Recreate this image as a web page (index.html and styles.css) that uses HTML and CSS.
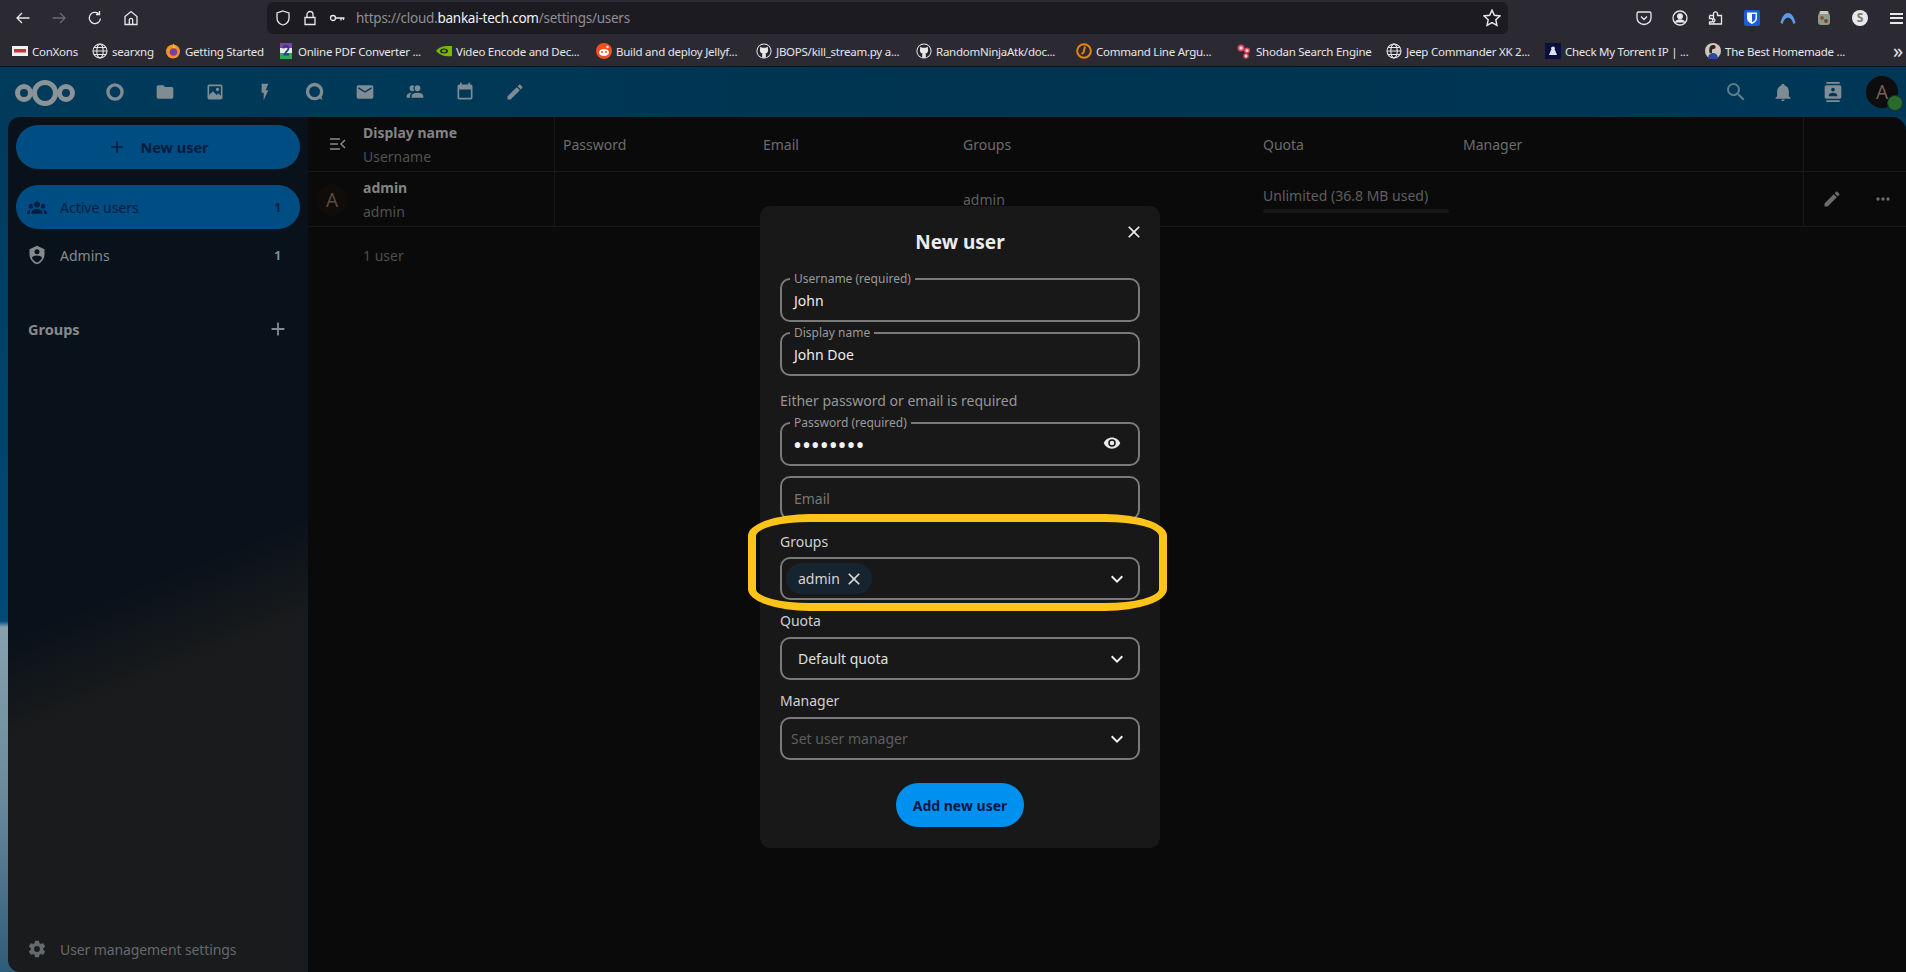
FILE: index.html
```html
<!DOCTYPE html>
<html lang="en">
<head>
<meta charset="utf-8">
<title>Users - Nextcloud</title>
<link rel="stylesheet" href="styles.css">
</head>
<body>
<svg class="sprite" aria-hidden="true">
  <symbol id="globe" viewBox="0 0 16 16"><g fill="none" stroke="#e6e6e6" stroke-width="1.1"><circle cx="8" cy="8" r="7"/><ellipse cx="8" cy="8" rx="3.2" ry="7"/><path d="M1 8h14M2 4.5h12M2 11.5h12"/></g></symbol>
  <symbol id="github" viewBox="0 0 16 16"><circle cx="8" cy="8" r="7.6" fill="#e8e8e8"/><circle cx="8" cy="8" r="6.6" fill="#25242b"/><path fill="#e8e8e8" d="M4.3 3.8l2 .9h3.4l2-.9.3 2.4c.5 2.6-.7 4.1-2.7 4.3.4.3.5.8.5 1.3v3H6.200v-3c0-.5.1-1 .5-1.300-2-.2-3.200-1.700-2.700-4.300z"/></symbol>
  <symbol id="chev" viewBox="0 0 24 24"><path d="M7.410 8.580L12 13.170L16.590 8.580L18 10L12 16L6 10L7.410 8.580Z"/></symbol>
  <symbol id="pencil" viewBox="0 0 24 24"><path d="M20.710 7.040C21.100 6.650 21.100 6 20.710 5.630L18.370 3.290C18 2.900 17.350 2.900 16.960 3.290L15.120 5.120L18.870 8.870M3 17.250V21H6.750L17.810 9.930L14.060 6.180L3 17.250Z"/></symbol>
  <symbol id="plus" viewBox="0 0 24 24"><path d="M19 13H13V19H11V13H5V11H11V5H13V11H19V13Z"/></symbol>
  <symbol id="close" viewBox="0 0 24 24"><path d="M19 6.410L17.590 5L12 10.590L6.410 5L5 6.410L10.590 12L5 17.590L6.410 19L12 13.410L17.590 19L19 17.590L13.410 12L19 6.410Z"/></symbol>
</svg>

<div class="page">
  <div class="toolbar">
    <div class="nav-slot"><svg class="tb-ic" viewBox="0 0 16 16"><path d="M14.500 8H2M7 3L2 8l5 5"/></svg></div>
    <div class="nav-slot dim"><svg class="tb-ic" viewBox="0 0 16 16"><path d="M1.500 8H14M9 3l5 5-5 5"/></svg></div>
    <div class="nav-slot"><svg class="tb-ic" viewBox="0 0 16 16"><path d="M13.500 8.500A5.600 5.600 0 1 1 11.500 3.600M12.500 1v3.500H9"/></svg></div>
    <div class="nav-slot"><svg class="tb-ic" viewBox="0 0 16 16"><path d="M2 14.500V6.500L8 1.500l6 5v8zM6.300 14.500v-4.500a1.700 1.700 0 0 1 3.400 0v4.500"/></svg></div>
    <div class="urlbar">
      <svg class="tb-ic" viewBox="0 0 16 16"><path d="M8 1l6 2v5c0 3.500-2.500 6-6 7-3.500-1-6-3.500-6-7V3z"/></svg>
      <svg class="tb-ic" viewBox="0 0 16 16"><path d="M3 7.500h10v7H3zM5 7.500V4.500a3 3 0 0 1 6 0v3"/></svg>
      <svg class="tb-ic" viewBox="0 0 16 16"><circle cx="4" cy="8" r="2.500"/><path d="M6.500 8h9M12 8v2.500M14.500 8v2"/></svg>
      <span class="url"><span class="url-dim">https://cloud.</span>bankai-tech.com<span class="url-dim">/settings/users</span></span>
      <svg class="tb-ic star" viewBox="0 0 16 16"><path d="M8 1l2.100 4.600 5 .6-3.700 3.400 1 5L8 12.100 3.600 14.600l1-5L.9 6.200l5-.6z"/></svg>
    </div>
    <div class="tb-right">
      <div class="nav-slot"><svg class="tb-ic" viewBox="0 0 16 16"><path d="M2.500 2h11A1.500 1.500 0 0 1 15 3.500V8a7 6.500 0 0 1-14 0V3.500A1.500 1.500 0 0 1 2.500 2zM5 6.500l3 3 3-3"/></svg></div>
      <div class="nav-slot"><svg class="tb-ic" viewBox="0 0 16 16"><circle cx="8" cy="8" r="7"/><circle cx="8" cy="6.300" r="2.300" fill="#eee"/><path d="M3.500 12.500c1-2 3-2.500 4.500-2.500s3.500.5 4.500 2.500" fill="#eee"/></svg></div>
      <div class="nav-slot"><svg class="tb-ic" viewBox="0 0 16 16"><path d="M1.500 5.500h4V3.800a2 2 0 0 1 4 0V5.500h4v8.500h-8v-2a1.800 1.800 0 0 0 0-3.500V5.500M1.500 5.500v3h2a1.800 1.800 0 0 1 0 3.500h-2v2h4"/></svg></div>
      <div class="nav-slot"><svg class="ext" viewBox="0 0 16 16"><rect width="16" height="16" rx="2" fill="#175ddc"/><path d="M3 2.500h10v6c0 2.500-2.500 4.500-5 5.500-2.500-1-5-3-5-5.500z" fill="#fff"/><path d="M8 4h3.500v4.500c0 1.500-1.800 3-3.500 3.800z" fill="#175ddc"/></svg></div>
      <div class="nav-slot"><svg class="ext" viewBox="0 0 16 16"><path d="M.5 13C2 6 5 3 8 3s6 3 7.500 10l-2 1C12 9.500 10 7.500 8 7.500S4 9.500 2.500 14z" fill="#5d9be8"/></svg></div>
      <div class="nav-slot"><svg class="ext" viewBox="0 0 16 16"><rect x="2" y="3" width="12" height="12" rx="3" fill="#8d9a8c"/><rect x="3.500" y="1" width="9" height="3" rx="1" fill="#c6ccc4"/><circle cx="6" cy="8" r="2" fill="#8a5a3c"/><circle cx="10" cy="11" r="2" fill="#6d4a30"/></svg></div>
      <div class="nav-slot"><span class="ext-s">S</span></div>
      <div class="nav-slot"><span class="burger"></span></div>
    </div>
  </div>

  <div class="bookmarks">
    <div class="bm"><svg class="fav" viewBox="0 0 16 16"><rect y="3" width="16" height="10" fill="#f2f2f2"/><rect x="2" y="6" width="12" height="3.500" fill="#c8343a"/></svg><span>ConXons</span></div>
    <div class="bm"><svg class="fav"><use href="#globe"/></svg><span>searxng</span></div>
    <div class="bm"><svg class="fav" viewBox="0 0 16 16"><circle cx="8" cy="8.500" r="7" fill="#f7931e"/><path d="M8 .5c2 2 .5 3 3 4l-3 2z" fill="#f9c33a"/><circle cx="8.500" cy="9" r="3.800" fill="#7b3fa0"/></svg><span>Getting Started</span></div>
    <div class="bm"><svg class="fav" viewBox="0 0 16 16"><rect x="2" y="0" width="12" height="5" fill="#7d3fa8"/><rect x="2" y="5" width="12" height="5" fill="#e8e8e8"/><rect x="2" y="10" width="12" height="6" fill="#2fa84f"/><path d="M5.500 5.500c0-3 5-3 5 0 0 2-3 3-4 6h4.500" fill="none" stroke="#24418c" stroke-width="1.800"/></svg><span>Online PDF Converter ...</span></div>
    <div class="bm"><svg class="fav" viewBox="0 0 16 16"><path d="M0 8C3 3.500 8 2.500 16 3v10c-7 .8-12-.5-16-5z" fill="#76b900"/><ellipse cx="8" cy="8" rx="4" ry="2.500" fill="#2b2a33"/><ellipse cx="8" cy="8" rx="2" ry="1.200" fill="#76b900"/></svg><span>Video Encode and Dec...</span></div>
    <div class="bm"><svg class="fav" viewBox="0 0 16 16"><circle cx="8" cy="8" r="8" fill="#f0501e"/><ellipse cx="8" cy="9.500" rx="5" ry="3.500" fill="#fff"/><circle cx="6" cy="9" r="1" fill="#f0501e"/><circle cx="10" cy="9" r="1" fill="#f0501e"/><circle cx="11.500" cy="4" r="1.200" fill="#fff"/></svg><span>Build and deploy Jellyf...</span></div>
    <div class="bm"><svg class="fav"><use href="#github"/></svg><span>JBOPS/kill_stream.py a...</span></div>
    <div class="bm"><svg class="fav"><use href="#github"/></svg><span>RandomNinjaAtk/doc...</span></div>
    <div class="bm"><svg class="fav" viewBox="0 0 16 16"><circle cx="8" cy="8" r="6.800" fill="none" stroke="#e8820c" stroke-width="2"/><path d="M9 3.500L7.500 9.500 5.500 11" fill="none" stroke="#e8820c" stroke-width="2"/></svg><span>Command Line Argu...</span></div>
    <div class="bm"><svg class="fav" viewBox="0 0 16 16"><circle cx="5" cy="5" r="3.500" fill="#d9485c"/><circle cx="5" cy="5" r="1.800" fill="#f6d5d9"/><circle cx="11" cy="7.500" r="3" fill="#d9485c"/><circle cx="11" cy="7.500" r="1.500" fill="#f6d5d9"/><circle cx="10" cy="13" r="2.800" fill="#d9485c"/><circle cx="10" cy="13" r="1.400" fill="#f6d5d9"/></svg><span>Shodan Search Engine</span></div>
    <div class="bm"><svg class="fav"><use href="#globe"/></svg><span>Jeep Commander XK 2...</span></div>
    <div class="bm"><svg class="fav" viewBox="0 0 16 16"><rect width="16" height="16" fill="#0a0f3c"/><path d="M4 12l2-5h4l2 5z" fill="#dfe3ee"/><circle cx="8" cy="5.500" r="2" fill="#dfe3ee"/></svg><span>Check My Torrent IP | ...</span></div>
    <div class="bm"><svg class="fav" viewBox="0 0 16 16"><circle cx="8" cy="8" r="8" fill="#cfc6c0"/><path d="M3 16c0-4 2-6 5-6s5 2 5 6z" fill="#2b4aa0"/><path d="M4.500 10c-1-6 1-8 3.500-8s3.500 2 2 3.500L7 6.500 7 10z" fill="#332420"/></svg><span>The Best Homemade ...</span></div>
    <div class="bm-more">»</div>
  </div>

  <header class="header">
    <div class="logo-slot">
      <svg class="logo" viewBox="0 0 60 26"><g fill="none" stroke="currentColor" stroke-width="5"><circle cx="9" cy="13" r="6.500"/><circle cx="30" cy="13" r="10.500"/><circle cx="51" cy="13" r="6.500"/></g></svg>
    </div>
    <nav class="apps">
      <div class="app"><svg class="ic20" viewBox="0 0 24 24"><circle cx="12" cy="12" r="8.500" fill="none" stroke="currentColor" stroke-width="4"/></svg></div>
      <div class="app"><svg class="ic20" viewBox="0 0 24 24"><path d="M10 4H4C2.890 4 2 4.890 2 6V18A2 2 0 0 0 4 20H20A2 2 0 0 0 22 18V8C22 6.890 21.100 6 20 6H12L10 4Z"/></svg></div>
      <div class="app"><svg class="ic20" viewBox="0 0 24 24"><path fill-rule="evenodd" d="M5 3H19A2 2 0 0 1 21 5V19A2 2 0 0 1 19 21H5A2 2 0 0 1 3 19V5A2 2 0 0 1 5 3ZM5 5V15.500L9.500 11L14 15.500L16 13.500L19 16.500V5ZM15 7A2 2 0 1 1 15 11A2 2 0 1 1 15 7Z"/></svg></div>
      <div class="app"><svg class="ic20" viewBox="0 0 24 24"><path d="M7 2V13H10V22L17 10H13L17 2H7Z" transform="matrix(.8 0 0 1 2.400 0)"/></svg></div>
      <div class="app"><svg class="ic20" viewBox="0 0 24 24"><circle cx="11.500" cy="11.500" r="8.500" fill="none" stroke="currentColor" stroke-width="4"/><path d="M15 18l6 4-2-7z"/></svg></div>
      <div class="app"><svg class="ic20" viewBox="0 0 24 24"><path d="M20 8L12 13L4 8V6L12 11L20 6M20 4H4C2.890 4 2 4.890 2 6V18A2 2 0 0 0 4 20H20A2 2 0 0 0 22 18V6C22 4.890 21.100 4 20 4Z"/></svg></div>
      <div class="app"><svg class="ic20 flip" viewBox="0 0 24 24"><path d="M16 17V19H2V17S2 13 9 13 16 17 16 17M12.500 7.500A3.500 3.500 0 1 0 9 11A3.500 3.500 0 0 0 12.500 7.500M15.940 13A5.320 5.320 0 0 1 18 17V19H22V17S22 13.370 15.940 13M15 4A3.390 3.390 0 0 0 13.070 4.590A5 5 0 0 1 13.070 10.410A3.390 3.390 0 0 0 15 11A3.500 3.500 0 0 0 15 4Z"/></svg></div>
      <div class="app"><svg class="ic20" viewBox="0 0 24 24"><path fill-rule="evenodd" d="M5 3H6V1H8V3H16V1H18V3H19A2 2 0 0 1 21 5V19A2 2 0 0 1 19 21H5A2 2 0 0 1 3 19V5A2 2 0 0 1 5 3ZM5 9V19H19V9Z"/></svg></div>
      <div class="app"><svg class="ic20"><use href="#pencil"/></svg></div>
    </nav>
    <div class="hdr-right">
      <div class="app search"><svg class="ic24" viewBox="0 0 24 24"><path d="M9.500 3A6.500 6.500 0 0 1 16 9.500C16 11.110 15.410 12.590 14.440 13.730L14.710 14H15.500L20.500 19L19 20.500L14 15.500V14.710L13.730 14.440C12.590 15.410 11.110 16 9.500 16A6.500 6.500 0 0 1 3 9.500A6.500 6.500 0 0 1 9.500 3M9.500 5C7 5 5 7 5 9.500C5 12 7 14 9.500 14C12 14 14 12 14 9.500C14 7 12 5 9.500 5Z"/></svg></div>
      <div class="app"><svg class="ic20" viewBox="0 0 24 24"><path d="M21 19V20H3V19L5 17V11C5 7.900 7.030 5.170 10 4.290C10 4.190 10 4.100 10 4A2 2 0 0 1 12 2A2 2 0 0 1 14 4C14 4.100 14 4.190 14 4.290C16.970 5.170 19 7.900 19 11V17L21 19M14 21A2 2 0 0 1 12 23A2 2 0 0 1 10 21"/></svg></div>
      <div class="app"><svg class="ic20" viewBox="0 0 24 24"><path d="M20 0H4V2H20V0M4 24H20V22H4V24M20 4H4C2.900 4 2 4.900 2 6V18C2 19.100 2.900 20 4 20H20C21.100 20 22 19.100 22 18V6C22 4.900 21.100 4 20 4M12 6.750C13.240 6.750 14.250 7.760 14.250 9C14.250 10.240 13.240 11.250 12 11.250C10.760 11.250 9.750 10.240 9.750 9C9.750 7.760 10.760 6.750 12 6.750M17 17H7V15.500C7 13.830 10.330 13 12 13C13.670 13 17 13.830 17 15.500V17Z"/></svg></div>
      <div class="me"><span class="me-avatar">A<span class="me-status"></span></span></div>
    </div>
  </header>

  <div class="workspace">
    <aside class="sidebar">
      <div class="new-user"><svg class="ic20"><use href="#plus"/></svg><span>New user</span></div>
      <div class="side-item active">
        <svg class="ic20 side-ic" viewBox="0 0 24 24"><path d="M12 5.500A3.500 3.500 0 0 1 15.500 9A3.500 3.500 0 0 1 12 12.500A3.500 3.500 0 0 1 8.500 9A3.500 3.500 0 0 1 12 5.500M5 8C5.560 8 6.080 8.150 6.530 8.420C6.380 9.850 6.800 11.270 7.660 12.380C7.160 13.340 6.160 14 5 14A3 3 0 0 1 2 11A3 3 0 0 1 5 8M19 8A3 3 0 0 1 22 11A3 3 0 0 1 19 14C17.840 14 16.840 13.340 16.340 12.380C17.200 11.270 17.620 9.850 17.470 8.420C17.920 8.150 18.440 8 19 8M5.500 18.250C5.500 16.180 8.410 14.500 12 14.500C15.590 14.500 18.500 16.180 18.500 18.250V20H5.500V18.250M0 20V18.500C0 17.110 1.890 15.940 4.450 15.600C3.860 16.280 3.500 17.220 3.500 18.250V20H0M24 20H20.500V18.250C20.500 17.220 20.140 16.280 19.550 15.600C22.110 15.940 24 17.110 24 18.500V20Z"/></svg>
        <span class="side-label">Active users</span><span class="count">1</span>
      </div>
      <div class="side-item admins">
        <svg class="ic20 side-ic" viewBox="0 0 24 24"><path d="M12 1L3 5V11C3 16.550 6.840 21.740 12 23C17.160 21.740 21 16.550 21 11V5L12 1M12 5A3 3 0 0 1 15 8A3 3 0 0 1 12 11A3 3 0 0 1 9 8A3 3 0 0 1 12 5M17.130 17C15.920 18.850 14.110 20.240 12 20.920C9.890 20.240 8.080 18.850 6.870 17C6.530 16.500 6.240 16 6 15.470C6 13.820 8.710 12.470 12 12.470C15.290 12.470 18 13.790 18 15.470C17.760 16 17.470 16.500 17.130 17Z"/></svg>
        <span class="side-label">Admins</span><span class="count">1</span>
      </div>
      <div class="side-caption"><span>Groups</span><svg class="ic20 cap-plus"><use href="#plus"/></svg></div>
      <div class="side-foot">
        <svg class="ic20 side-ic" viewBox="0 0 24 24"><path d="M12 15.500A3.500 3.500 0 0 1 8.500 12A3.500 3.500 0 0 1 12 8.500A3.500 3.500 0 0 1 15.500 12A3.500 3.500 0 0 1 12 15.500M19.430 12.970C19.470 12.650 19.500 12.330 19.500 12C19.500 11.670 19.470 11.340 19.430 11L21.540 9.370C21.730 9.220 21.780 8.950 21.660 8.730L19.660 5.270C19.540 5.050 19.270 4.960 19.050 5.050L16.560 6.050C16.040 5.660 15.500 5.320 14.870 5.070L14.500 2.420C14.460 2.180 14.250 2 14 2H10C9.750 2 9.540 2.180 9.500 2.420L9.130 5.070C8.500 5.320 7.960 5.660 7.440 6.050L4.950 5.050C4.730 4.960 4.460 5.050 4.340 5.270L2.340 8.730C2.210 8.950 2.270 9.220 2.460 9.370L4.570 11C4.530 11.340 4.500 11.670 4.500 12C4.500 12.330 4.530 12.650 4.570 12.970L2.460 14.630C2.270 14.780 2.210 15.050 2.340 15.270L4.340 18.730C4.460 18.950 4.730 19.030 4.950 18.950L7.440 17.940C7.960 18.340 8.500 18.680 9.130 18.930L9.500 21.580C9.540 21.820 9.750 22 10 22H14C14.250 22 14.460 21.820 14.500 21.580L14.870 18.930C15.500 18.670 16.040 18.340 16.560 17.940L19.050 18.950C19.270 19.030 19.540 18.950 19.660 18.730L21.660 15.270C21.780 15.050 21.730 14.780 21.540 14.630L19.430 12.970Z"/></svg>
        <span>User management settings</span>
      </div>
    </aside>

    <main class="content">
      <div class="row head">
        <div class="c-lead"><svg class="toggle" viewBox="0 0 20 16"><path d="M2 3h10M2 8h8M2 13h10M17 4l-4 4 4 4"/></svg></div>
        <div class="c-name"><div class="strong">Display name</div><div class="faint">Username</div></div>
        <div class="c-col pass">Password</div>
        <div class="c-col email">Email</div>
        <div class="c-col groups">Groups</div>
        <div class="c-col quota">Quota</div>
        <div class="c-col manager">Manager</div>
        <div class="c-act"></div>
      </div>
      <div class="row">
        <div class="c-lead"><span class="u-avatar">A</span></div>
        <div class="c-name"><div class="strong">admin</div><div class="faint">admin</div></div>
        <div class="c-col pass"></div>
        <div class="c-col email"></div>
        <div class="c-col groups cell-text">admin</div>
        <div class="c-col quota cell-text"><div class="quota-cell"><span>Unlimited (36.8 MB used)</span><span class="bar"></span></div></div>
        <div class="c-col manager"></div>
        <div class="c-act"><svg class="ic20 act-edit"><use href="#pencil"/></svg><svg class="ic20" viewBox="0 0 24 24"><path d="M16 12A2 2 0 0 1 18 10A2 2 0 0 1 20 12A2 2 0 0 1 18 14A2 2 0 0 1 16 12M10 12A2 2 0 0 1 12 10A2 2 0 0 1 14 12A2 2 0 0 1 12 14A2 2 0 0 1 10 12M4 12A2 2 0 0 1 6 10A2 2 0 0 1 8 12A2 2 0 0 1 6 14A2 2 0 0 1 4 12Z"/></svg></div>
      </div>
      <div class="user-total">1 user</div>
    </main>
  </div>

  <section class="modal">
    <button class="modal-close"><svg class="ic24"><use href="#close"/></svg></button>
    <h2 class="modal-title">New user</h2>
    <div class="field"><label class="float">Username (required)</label><span class="value">John</span></div>
    <div class="field gap"><label class="float">Display name</label><span class="value">John Doe</span></div>
    <p class="hint">Either password or email is required</p>
    <div class="field"><label class="float">Password (required)</label><span class="dots">••••••••</span><svg class="eye" viewBox="0 0 24 24"><path d="M12 9A3 3 0 0 0 9 12A3 3 0 0 0 12 15A3 3 0 0 0 15 12A3 3 0 0 0 12 9M12 17A5 5 0 0 1 7 12A5 5 0 0 1 12 7A5 5 0 0 1 17 12A5 5 0 0 1 12 17M12 4.500C7 4.500 2.730 7.610 1 12C2.730 16.390 7 19.500 12 19.500C17 19.500 21.270 16.390 23 12C21.270 7.610 17 4.500 12 4.500Z"/></svg></div>
    <div class="field gap"><span class="placeholder">Email</span></div>
    <div class="sel-label first">Groups</div>
    <div class="select"><span class="chip"><span>admin</span><svg class="chip-x"><use href="#close"/></svg></span><svg class="chev"><use href="#chev"/></svg></div>
    <div class="sel-label">Quota</div>
    <div class="select"><span class="sel-value">Default quota</span><svg class="chev"><use href="#chev"/></svg></div>
    <div class="sel-label">Manager</div>
    <div class="select"><span class="sel-ph">Set user manager</span><svg class="chev"><use href="#chev"/></svg></div>
    <div class="modal-foot"><button class="add-btn">Add new user</button></div>
  </section>
  <div class="highlight"></div>
</div>
</body>
</html>
```
FILE: styles.css
```css
* { box-sizing: border-box; }
html, body { margin: 0; padding: 0; height: 100%; background: #0a0a0a; }
body { font-family: "Noto Sans", "Open Sans", sans-serif; overflow: hidden; }
.sprite { display: none; }
svg { display: block; flex: none; fill: currentColor; }
.page { position: relative; width: 1906px; height: 972px; display: flex; flex-direction: column; overflow: hidden; }

/* browser toolbar */
.toolbar { height: 36px; background: #2b2a33; display: flex; align-items: flex-start; padding-left: 5px; color: #e8e8ea; flex: none; }
.nav-slot { width: 36px; height: 36px; display: flex; align-items: center; justify-content: center; flex: none; }
.nav-slot.dim { color: #6c6b73; }
.tb-ic { width: 16px; height: 16px; fill: none; stroke: currentColor; stroke-width: 1.300; }
.urlbar { margin: 2px 0 0 118px; width: 1241px; height: 32px; border-radius: 6px; background: #1c1b22; display: flex; align-items: center; gap: 11px; padding: 0 7px 0 8px; flex: none; }
.url { font-size: 13.500px; letter-spacing: -.25px; color: #f2f2f2; white-space: nowrap; }
.url-dim { color: #8f8e96; }
.star { margin-left: auto; width: 18px; height: 18px; }
.tb-right { display: flex; margin-left: 118px; flex: none; }
.ext { width: 16px; height: 16px; }
.ext-s { width: 16px; height: 16px; border-radius: 50%; background: #e8e8e8; color: #77777c; font-size: 12px; font-weight: 700; line-height: 16px; text-align: center; }
.burger { width: 13px; height: 11px; border-top: 2px solid #e8e8ea; border-bottom: 2px solid #e8e8ea; position: relative; }
.burger::after { content: ""; position: absolute; left: 0; right: 0; top: 2.500px; height: 2px; background: #e8e8ea; }

/* bookmarks */
.bookmarks { height: 31px; background: #2b2a33; border-bottom: 1px solid #11131a; flex: none; display: grid; grid-template-columns: 80px 73px 113px 158px 160px 160px 160px 160px 160px 150px 159px 160px 188px 13px; padding-left: 12px; align-items: center; font-size: 11.500px; letter-spacing: -.25px; color: #e6e6e8; }
.bm { display: flex; align-items: center; gap: 4px; white-space: nowrap; }
.fav { width: 16px; height: 16px; }
.bm-more { font-size: 20px; line-height: 20px; }

/* nextcloud header */
.header { height: 50px; background: linear-gradient(90deg, #003b5c, #00344f 50%, #003756); display: flex; align-items: center; color: #7f8c93; flex: none; }
.logo-slot { width: 90px; padding-left: 15px; color: #8b9397; padding-top: 1px; }
.logo { width: 60px; height: 26px; }
.apps, .hdr-right { display: flex; align-items: center; }
.hdr-right { margin-left: auto; }
.app { width: 50px; display: flex; justify-content: center; align-items: center; }
.app.search { padding-left: 6px; color: #5f7d8c; }
.ic20 { width: 20px; height: 20px; }
.ic24 { width: 24px; height: 24px; }
.flip { transform: scaleX(-1); }
.me { width: 48px; display: flex; justify-content: center; }
.me-avatar { position: relative; width: 32px; height: 32px; border-radius: 50%; background: #0d0d0d; color: #75605a; font-size: 19px; line-height: 32px; text-align: center; }
.me-status { position: absolute; right: -5px; bottom: -3px; width: 16px; height: 16px; border-radius: 50%; background: #2b6a2c; border: 1px solid #0e3a22; }

/* workspace */
.workspace { flex: 1; display: flex; padding-left: 8px; min-height: 0; background: linear-gradient(180deg, #003a5c 0, #004a78 504px, #86a0ae 510px, #6a8a9c 680px, #2e5c79 855px); }
.sidebar { width: 300px; padding: 8px 8px 1px; border-radius: 12px 0 0 12px; background: linear-gradient(158deg, #09121a 0, #09121a 53.5%, #1a1b1c 64%, #191b1c 100%); display: flex; flex-direction: column; color: #868a8d; font-size: 14px; }
.new-user { height: 44px; border-radius: 22px; background: #004d83; color: #001c3c; font-weight: 700; font-size: 14.500px; display: flex; align-items: center; justify-content: center; gap: 13px; }
.side-item { height: 44px; border-radius: 22px; display: flex; align-items: center; padding: 0 19px 0 11px; font-size: 14px; }
.side-item.active { margin-top: 16px; background: #004d83; color: #001e42; }
.side-item.admins { margin-top: 4px; }
.side-ic { margin-right: 13px; }
.side-label { flex: 1; }
.count { font-size: 12px; font-weight: 700; }
.side-item.admins .count { color: #7f8f9a; }
.side-caption { margin-top: 30px; height: 44px; display: flex; align-items: center; justify-content: space-between; padding: 0 11px 0 12px; font-weight: 700; font-size: 14.500px; }
.cap-plus { width: 22px; height: 22px; }
.side-foot { margin-top: auto; height: 44px; display: flex; align-items: center; padding-left: 11px; font-size: 14px; letter-spacing: -.1px; color: #66696b; }

/* table */
.content { flex: 1; background: #0a0a0a; border-top-right-radius: 14px; font-size: 14px; color: #6c6c6c; }
.row { height: 55px; display: flex; border-bottom: 1px solid #181818; }
.c-lead { width: 55px; display: flex; align-items: center; justify-content: center; padding-right: 0; color: #8a8a8a; }
.c-name { width: 192px; padding-top: 4px; line-height: 24px; border-right: 1px solid #181818; }
.strong { font-weight: 700; color: #838383; }
.faint { color: #505050; }
.c-col { display: flex; align-items: center; }
.pass { width: 208px; padding-left: 8px; }
.email { width: 200px; }
.groups { width: 300px; }
.quota { width: 200px; }
.manager { width: 340px; }
.cell-text { color: #5f5f5f; }
.c-act { flex: 1; border-left: 1px solid #181818; display: flex; align-items: center; padding: 0 13px 1px 18px; justify-content: space-between; color: #6c6c6c; }
.toggle { width: 20px; height: 16px; fill: none; stroke: currentColor; stroke-width: 1.500; margin-left: 4px; }
.u-avatar { width: 32px; height: 32px; border-radius: 50%; background: #100c0a; color: #5c4a40; font-size: 19px; line-height: 32px; text-align: center; margin-left: -7px; margin-top: 2px; }
.quota-cell { display: flex; flex-direction: column; white-space: nowrap; }
.bar { width: 186px; height: 4px; border-radius: 2px; background: #171717; margin-top: 4px; }
.user-total { padding: 17px 0 0 55px; line-height: 24px; color: #4e4e4e; }

/* modal */
.modal { position: absolute; left: 760px; top: 206px; width: 400px; height: 642px; padding: 72px 20px 0; background: #181818; border-radius: 10px; color: #e8e8e8; font-size: 14px; }
.modal-title { position: absolute; left: 0; right: 0; top: 23px; margin: 0; text-align: center; font-size: 19px; line-height: 26px; font-weight: 700; color: #ececec; }
.modal-close { position: absolute; right: 14px; top: 14px; width: 24px; height: 24px; padding: 0; border: 0; background: none; color: #f0f0f0; }
.modal-close .ic24 { width: 20px; height: 20px; margin: 2px; }
.field { position: relative; height: 44px; border: 2px solid #7a7a7a; border-radius: 10px; display: flex; align-items: center; padding: 1px 12px 0; }
.field.gap { margin-top: 10px; }
.float { position: absolute; left: 8px; top: -9px; padding: 0 4px; background: #181818; font-size: 12px; line-height: 16px; color: #9a9a9a; }
.value { color: #ececec; }
.dots { font-size: 24px; line-height: 24px; letter-spacing: -.1px; color: #f2f2f2; margin-left: -1px; }
.eye { width: 18px; height: 18px; margin-left: auto; margin-right: 5px; margin-top: -3px; }
.hint { margin: 0; height: 46px; padding-top: 15px; line-height: 20px; color: #969696; }
.placeholder { color: #777; }
.sel-label { height: 37px; line-height: 20px; padding-top: 11px; color: #d0d0d0; }
.sel-label.first { padding-top: 12px; }
.select { height: 43px; border: 2px solid #7a7a7a; border-radius: 10px; display: flex; align-items: center; padding: 0 8px 0 4px; }
.chip { display: flex; align-items: center; gap: 4px; height: 31px; width: 86px; padding-left: 12px; border-radius: 16px; background: #15242f; color: #d6d6d6; }
.chip-x { width: 20px; height: 20px; }
.chev { width: 24px; height: 24px; margin-left: auto; color: #eee; margin-right: 1px; }
.sel-value { padding-left: 12px; color: #e0e0e0; }
.sel-ph { padding-left: 5px; color: #5e5e5e; }
.modal-foot { margin-top: 23px; display: flex; justify-content: center; }
.add-btn { width: 128px; height: 44px; border: 0; border-radius: 22px; background: #0090f0; color: #001a3f; font: 700 14px "Noto Sans", sans-serif; padding: 0; white-space: nowrap; }

/* annotation */
.highlight { position: absolute; left: 748px; top: 514px; width: 419px; height: 97px; border: 8px solid #fcc419; border-radius: 62px / 22px; }
```
